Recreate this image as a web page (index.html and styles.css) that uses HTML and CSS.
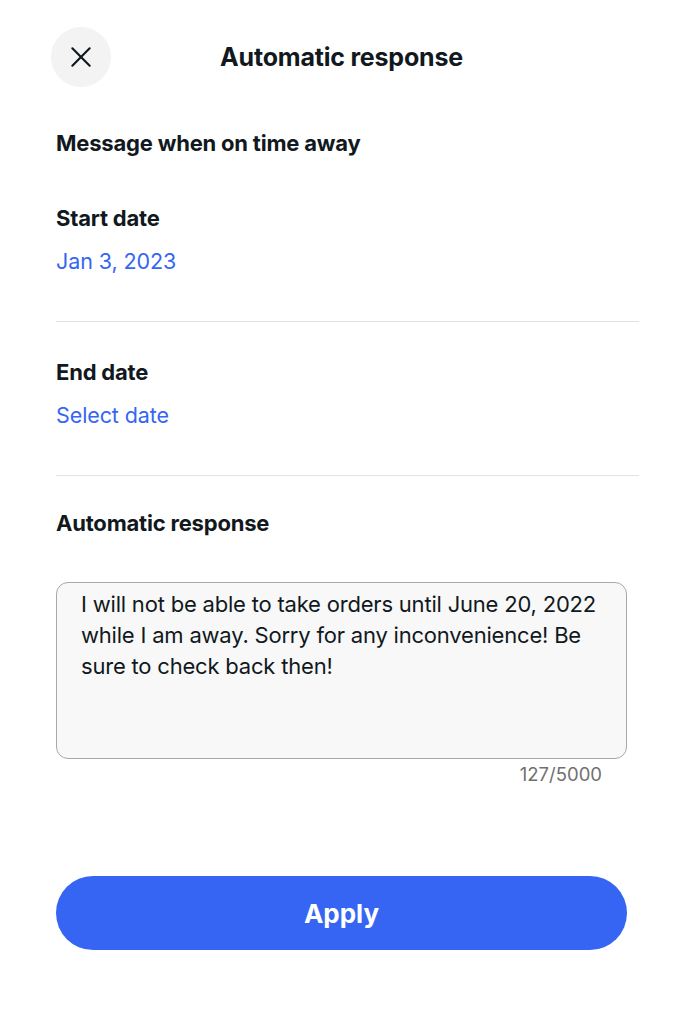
FILE: index.html
```html
<!DOCTYPE html>
<html lang="en">
<head>
<meta charset="utf-8">
<link rel="stylesheet" href="styles.css">
</head>
<body>
<div class="page">
  <header class="topbar">
    <button class="close" aria-label="Close">
      <svg width="26" height="26" viewBox="0 0 24 24" fill="none" stroke="#111820" stroke-width="2" stroke-linecap="round"><path d="M4 4 L20 20 M20 4 L4 20"/></svg>
    </button>
    <h1 class="title">Automatic response</h1>
  </header>

  <h2 class="section">Message when on time away</h2>

  <div class="field">
    <div class="label">Start date</div>
    <div class="link">Jan 3, 2023</div>
  </div>
  <div class="field">
    <div class="label">End date</div>
    <div class="link">Select date</div>
  </div>

  <div class="response">
    <div class="label">Automatic response</div>
    <div class="textarea">I will not be able to take orders until June 20, 2022 while I am away. Sorry for any inconvenience! Be sure to check back then!</div>
    <div class="counter">127/5000</div>
  </div>

  <button class="apply">Apply</button>
</div>
</body>
</html>
```
FILE: styles.css
```css
* { box-sizing: border-box; }
html, body { margin: 0; padding: 0; background: #fff; }
body {
  font-family: Inter, "Liberation Sans", sans-serif;
  color: #111820;
}
.page {
  padding: 27px 56px 0 56px;
  display: flex;
  flex-direction: column;
}
.topbar {
  position: relative;
  height: 60px;
  display: flex;
  align-items: center;
  justify-content: center;
}
.close {
  position: absolute;
  left: -5px;
  top: 0;
  width: 60px;
  height: 60px;
  border-radius: 50%;
  border: none;
  background: #f3f3f3;
  display: flex;
  align-items: center;
  justify-content: center;
  padding: 0;
}
.title {
  margin: 0;
  font-size: 25px;
  font-weight: 700;
  letter-spacing: -0.2px;
}
.section {
  margin: 41px 0 10px 0;
  font-size: 22px;
  font-weight: 700;
  line-height: 30px;
  letter-spacing: -0.2px;
}
.field {
  border-bottom: 1px solid #e2e2e2;
  margin-right: -12px;
  padding: 35px 0 45px 0;
}
.label {
  font-size: 22px;
  font-weight: 700;
  line-height: 30px;
  letter-spacing: -0.2px;
}
.link {
  margin-top: 13px;
  font-size: 21.5px;
  line-height: 30px;
  color: #3665f3;
  letter-spacing: -0.1px;
}
.response {
  padding-top: 32px;
  display: flex;
  flex-direction: column;
}
.textarea {
  margin-top: 44px;
  height: 177px;
  width: 571px;
  border: 1.5px solid #a8a8a8;
  border-radius: 12px;
  background: #f8f8f8;
  padding: 6px 20px 6px 24px;
  font-size: 22px;
  line-height: 31px;
  letter-spacing: -0.2px;
}
.counter {
  width: 546px;
  text-align: right;
  margin-top: 3px;
  font-size: 18.5px;
  line-height: 24px;
  color: #707070;
}
.apply {
  margin-top: 90px;
  width: 571px;
  height: 74px;
  border: none;
  border-radius: 37px;
  background: #3665f3;
  color: #fff;
  font-family: Inter, "Liberation Sans", sans-serif;
  font-size: 26px;
  font-weight: 700;
}
```
